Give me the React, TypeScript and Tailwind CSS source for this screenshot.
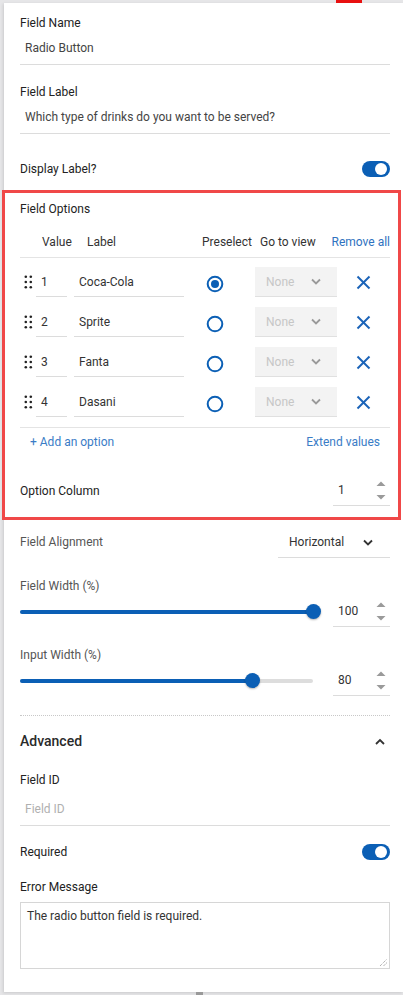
import React from "react";

const BLUE = "#0b5fb5";

function Toggle() {
  return (
    <div className="relative w-[28px] h-[16px] rounded-full bg-[#0b5fb5]">
      <div className="absolute right-[3px] top-[2px] w-[12px] h-[12px] rounded-full bg-white" />
    </div>
  );
}

function Spinner() {
  return (
    <svg width="10" height="20" viewBox="0 0 10 20" className="shrink-0">
      <polygon points="0.5,5 5,0.5 9.5,5" fill="#9a9a9a" />
      <polygon points="0.5,14 5,18.5 9.5,14" fill="#9a9a9a" />
    </svg>
  );
}

function NumberInput({ value }: { value: string }) {
  return (
    <div className="w-[57px] h-[31px] border-b border-[#dcdcdc] flex items-center pl-[5px] pr-[4px]">
      <span className="text-[12px] text-[#333]">{value}</span>
      <div className="ml-auto mt-[1px]">
        <Spinner />
      </div>
    </div>
  );
}

function Chevron({ up = false, color = "#333", w = 10 }: { up?: boolean; color?: string; w?: number }) {
  return (
    <svg width={w} height="7" viewBox="0 0 10 7">
      {up ? (
        <polyline points="1,6 5,2 9,6" fill="none" stroke={color} strokeWidth="1.8" />
      ) : (
        <polyline points="1,1.5 5,5.5 9,1.5" fill="none" stroke={color} strokeWidth="1.8" />
      )}
    </svg>
  );
}

function DragHandle() {
  return (
    <svg width="16" height="16" viewBox="0 0 16 16">
      {[2.7, 8, 13.3].map((y) => (
        <React.Fragment key={y}>
          <circle cx="5.8" cy={y} r="1.3" fill="#222" />
          <circle cx="10.8" cy={y} r="1.3" fill="#222" />
        </React.Fragment>
      ))}
    </svg>
  );
}

function Radio({ checked }: { checked: boolean }) {
  return (
    <svg width="18" height="18" viewBox="0 0 18 18">
      <circle cx="9" cy="9" r="7.3" fill="none" stroke={BLUE} strokeWidth="2" />
      {checked && <circle cx="9" cy="9" r="4" fill={BLUE} />}
    </svg>
  );
}

function CloseX() {
  return (
    <svg width="15" height="15" viewBox="0 0 15 15">
      <line x1="1.5" y1="1.5" x2="13.5" y2="13.5" stroke="#1a63b8" strokeWidth="2" />
      <line x1="13.5" y1="1.5" x2="1.5" y2="13.5" stroke="#1a63b8" strokeWidth="2" />
    </svg>
  );
}

function OptionRow({ v, label, checked }: { v: string; label: string; checked: boolean }) {
  return (
    <div className="h-[40px] flex items-center">
      <div className="w-[16px] flex items-center">
        <DragHandle />
      </div>
      <div className="w-[31px] h-[30px] border-b border-[#dcdcdc] flex items-center pl-[5px] text-[12px] text-[#333]">
        {v}
      </div>
      <div className="ml-[7px] w-[110px] h-[30px] border-b border-[#dcdcdc] flex items-center pl-[5px] text-[12px] text-[#333]">
        {label}
      </div>
      <div className="w-[62px] flex justify-center pt-[4px]">
        <Radio checked={checked} />
      </div>
      <div className="ml-[9px] w-[82px] h-[30px] bg-[#f3f3f3] border-b border-[#e0e0e0] flex items-center pl-[11px] pr-[16px]">
        <span className="text-[12px] text-[#c6c6c6]">None</span>
        <div className="ml-auto">
          <Chevron color="#9a9a9a" />
        </div>
      </div>
      <div className="flex-1 flex justify-center pr-[1px]">
        <CloseX />
      </div>
    </div>
  );
}

function Slider({ pct }: { pct: number }) {
  return (
    <div className="relative w-[293px] h-[16px] flex items-center">
      <div className="w-full h-[4px] rounded-full bg-[#dddddd]" />
      <div className="absolute left-0 h-[4px] rounded-full bg-[#0b5fb5]" style={{ width: `${pct}%` }} />
      <div
        className="absolute w-[15px] h-[15px] rounded-full bg-[#0b5fb5] shadow-[0_1px_2px_rgba(0,0,0,0.3)]"
        style={{ left: `calc(${pct}% - 7.5px)` }}
      />
    </div>
  );
}

export default function App() {
  return (
    <div className="relative w-[403px] h-[995px] bg-[#e6e6e8] overflow-hidden font-['Roboto',sans-serif]">
      <div className="absolute left-[336px] top-0 w-[26px] h-[3px] bg-[#e81010]" />
      <div className="ml-[4px] mt-[3px] w-[399px] h-[989px] bg-white shadow-[-1px_1px_3px_rgba(0,0,0,0.12)] pl-[16px] pr-[13px] pt-[12px] flex flex-col">
        {/* Field Name */}
        <div className="text-[12px] leading-[16px] text-[#222]">Field Name</div>
        <div className="mt-[1px] h-[33px] border-b border-[#dcdcdc] flex items-center pl-[5px] text-[12px] text-[#444]">
          Radio Button
        </div>
        {/* Field Label */}
        <div className="mt-[19px] text-[12px] leading-[16px] text-[#222]">Field Label</div>
        <div className="mt-[1px] h-[33px] border-b border-[#dcdcdc] flex items-center pl-[5px] text-[12px] text-[#444]">
          Which type of drinks do you want to be served?
        </div>
        {/* Display Label */}
        <div className="mt-[23px] h-[24px] flex items-center justify-between">
          <span className="text-[12px] text-[#222]">Display Label?</span>
          <Toggle />
        </div>

        {/* Field Options (highlighted) */}
        <div className="mt-[9px] -ml-[18px] -mr-[11px] border-[3px] border-[#f04848] pl-[15px] pr-[8px] pt-[8px] pb-[11px]">
          <div className="text-[12px] leading-[16px] text-[#222]">Field Options</div>
          <div className="mt-[10px] h-[31px] border-b border-[#e4e4e4] flex items-center text-[12px] text-[#333]">
            <span className="ml-[22px] w-[45px]">Value</span>
            <span className="w-[115px]">Label</span>
            <span className="w-[58px]">Preselect</span>
            <span>Go to view</span>
            <span className="ml-auto text-[#2f72c0]">Remove all</span>
          </div>
          <div className="mt-[4px]">
            <OptionRow v="1" label="Coca-Cola" checked />
            <OptionRow v="2" label="Sprite" checked={false} />
            <OptionRow v="3" label="Fanta" checked={false} />
            <OptionRow v="4" label="Dasani" checked={false} />
          </div>
          <div className="mt-[5px] border-t border-[#e4e4e4] h-[29px] flex items-center text-[12px] text-[#3a7cc6]">
            <span className="ml-[10px]">+ Add an option</span>
            <span className="ml-auto mr-[10px]">Extend values</span>
          </div>
          <div className="mt-[19px] flex items-center justify-between">
            <span className="text-[12px] text-[#222]">Option Column</span>
            <NumberInput value="1" />
          </div>
        </div>

        {/* Field Alignment */}
        <div className="mt-[7px] h-[31px] flex items-center justify-between">
          <span className="text-[12px] text-[#555] -mt-[2px]">Field Alignment</span>
          <div className="w-[112px] h-[31px] border-b border-[#dcdcdc] flex items-center pl-[11px] pr-[17px]">
            <span className="text-[12px] text-[#333]">Horizontal</span>
            <div className="ml-auto">
              <Chevron />
            </div>
          </div>
        </div>

        {/* Field Width */}
        <div className="mt-[20px] text-[12px] leading-[16px] text-[#555]">Field Width (%)</div>
        <div className="mt-[2px] flex items-center">
          <Slider pct={100} />
          <div className="ml-auto">
            <NumberInput value="100" />
          </div>
        </div>

        {/* Input Width */}
        <div className="mt-[20px] text-[12px] leading-[16px] text-[#555]">Input Width (%)</div>
        <div className="mt-[2px] flex items-center">
          <Slider pct={79.5} />
          <div className="ml-auto">
            <NumberInput value="80" />
          </div>
        </div>

        <div className="mt-[19px] border-t border-dotted border-[#c8c8c8]" />

        {/* Advanced */}
        <div className="mt-[13px] h-[24px] flex items-center justify-between">
          <span className="text-[14px] font-medium text-[#2a2a2a]">Advanced</span>
          <div className="mr-[5px]">
            <Chevron up />
          </div>
        </div>

        <div className="mt-[19px] text-[12px] leading-[16px] text-[#222]">Field ID</div>
        <div className="mt-[5px] h-[33px] border-b border-[#dcdcdc] flex items-center pl-[5px] text-[12px] text-[#b0b0b0]">
          Field ID
        </div>

        <div className="mt-[14px] h-[24px] flex items-center justify-between">
          <span className="text-[12px] text-[#222]">Required</span>
          <Toggle />
        </div>

        <div className="mt-[15px] text-[12px] leading-[16px] text-[#222]">Error Message</div>
        <div className="mt-[7px] relative h-[67px] border border-[#d6d6d6] px-[6px] pt-[5px] text-[12px] leading-[16px] text-[#333]">
          The radio button field is required.
          <svg className="absolute right-[1px] bottom-[1px]" width="9" height="9" viewBox="0 0 9 9">
            <line x1="1" y1="8" x2="8" y2="1" stroke="#777" strokeWidth="0.8" strokeDasharray="1 1" />
            <line x1="4.5" y1="8" x2="8" y2="4.5" stroke="#777" strokeWidth="0.8" strokeDasharray="1 1" />
          </svg>
        </div>
      </div>
      <div className="absolute left-[196px] bottom-0 w-[7px] h-[3px] bg-[#999]" />
    </div>
  );
}
